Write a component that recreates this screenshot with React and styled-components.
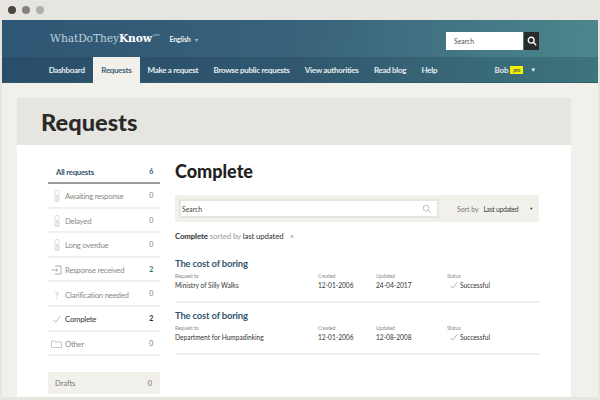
import React from 'react'
import styled, { createGlobalStyle } from 'styled-components'

const Global = createGlobalStyle`
  html, body { margin: 0; padding: 0; }
  body { width: 600px; height: 400px; overflow: hidden; background: #e6e5e0; font-family: Lato, "Noto Sans", sans-serif; color: #2a2a2a; }
`

const Frame = styled.div`
  width: 600px;
  height: 400px;
  box-sizing: border-box;
  padding: 0 2px 3px;
  display: flex;
  flex-direction: column;
`

const Chrome = styled.div`
  height: 20px;
  flex: none;
  display: flex;
  align-items: center;
  gap: 6px;
  padding-left: 6px;
`

const Dot = styled.span`
  width: 8px;
  height: 8px;
  border-radius: 50%;
  background: ${p => p.$color};
`

const Window = styled.div`
  flex: 1;
  min-height: 0;
  display: flex;
  flex-direction: column;
  background: #f2f0eb;
`

const Header = styled.header`
  flex: none;
  background: linear-gradient(100deg, #2f5674 0%, #39627b 50%, #4c888e 100%);
`

const Masthead = styled.div`
  height: 37px;
  display: flex;
  align-items: center;
  padding-left: 48px;
`

const Logo = styled.div`
  font-family: "DejaVu Serif", serif;
  font-size: 10.7px;
  letter-spacing: -0.1px;
  color: #bfd0da;
  b { color: #fff; font-weight: 700; }
  sup { font-size: 4px; margin-left: 1px; vertical-align: 6px; line-height: 0; }
`

const Lang = styled.div`
  margin-left: 10px;
  font-size: 7px;
  font-weight: 700;
  letter-spacing: -0.15px;
  color: #e8eef1;
  span { margin-left: 4px; color: #a9bfcc; font-size: 6px; font-weight: 400; }
`

const SearchBox = styled.div`
  margin: 5px 59px 0 auto;
  display: flex;
  gap: 1px;
  height: 18px;
`

const SearchField = styled.div`
  width: 77px;
  box-sizing: border-box;
  background: #fff;
  font-size: 6.8px;
  color: #555;
  padding-left: 8px;
  line-height: 18px;
`

const SearchButton = styled.div`
  width: 15px;
  background: #2b2b2b;
  display: flex;
  align-items: center;
  justify-content: center;
`

const Nav = styled.nav`
  height: 25px;
  display: flex;
  align-items: stretch;
  padding-left: 39px;
  background: rgba(20, 50, 70, 0.22);
  border-bottom: 1px solid #2f5a68;
`

const NavItem = styled.a`
  display: flex;
  align-items: center;
  padding: 0 7.7px;
  font-size: 8px;
  font-weight: 700;
  letter-spacing: -0.3px;
  white-space: nowrap;
  color: ${p => (p.$active ? '#3f6078' : '#e6edf0')};
  background: ${p => (p.$active ? '#f2f0eb' : 'transparent')};
  margin-bottom: ${p => (p.$active ? '-1px' : '0')};
  margin-left: ${p => (p.$active ? '0.5px' : '0')};
  width: ${p => (p.$active ? '47px' : 'auto')};
  box-sizing: border-box;
  justify-content: center;
`

const User = styled.div`
  margin-left: auto;
  margin-right: 62px;
  display: flex;
  align-items: center;
  font-size: 8px;
  font-weight: 700;
  letter-spacing: -0.2px;
  color: #dfe8ec;
`

const Pro = styled.span`
  margin-left: 2px;
  padding: 0 3px;
  background: #f2f200;
  color: #555;
  font-size: 5px;
  line-height: 8px;
`

const Caret = styled.span`
  margin-left: 7px;
  font-size: 6px;
  color: ${p => p.$color || 'inherit'};
`

const Page = styled.main`
  flex: 1;
  min-height: 0;
  margin: 15px 27px 0 15px;
  display: flex;
  flex-direction: column;
`

const TitleBar = styled.div`
  height: 47px;
  flex: none;
  background: #e6e5e0;
  display: flex;
  align-items: center;
  padding-left: 24px;
`

const PageTitle = styled.h1`
  margin: 0;
  font-size: 23.6px;
  font-weight: 900;
  color: #2a2a2a;
`

const Panel = styled.div`
  flex: 1;
  min-height: 0;
  background: #fff;
  padding: 17px 32px 0 31px;
  display: flex;
  gap: 15px;
`

const Sidebar = styled.aside`
  width: 112px;
  flex: none;
`

const SideRow = styled.div`
  height: ${p => (p.$head ? '22px' : '24.6px')};
  box-sizing: border-box;
  display: flex;
  align-items: center;
  padding: ${p => (p.$head ? '0' : '2px')} 7px 0 ${p => (p.$head ? '8px' : '3px')};
  font-size: 7.8px;
  letter-spacing: -0.25px;
  white-space: nowrap;
  font-weight: ${p => (p.$head ? 700 : 400)};
  color: ${p => (p.$head ? '#34566e' : p.$active ? '#333' : '#8a8a86')};
  border-bottom: ${p => (p.$head ? '2px solid #9a9a96' : '2px solid #f1f0ec')};
`

const SideIcon = styled.span`
  width: 11px;
  margin-right: 3px;
  flex: none;
  display: flex;
  justify-content: center;
`

const Count = styled.span`
  margin-left: auto;
  font-size: 7px;
  align-self: flex-start;
  margin-top: 5px;
  font-weight: ${p => (p.$strong ? 700 : 400)};
  color: ${p => p.$color || '#777'};
`

const Drafts = styled.div`
  margin-top: 16px;
  height: 22px;
  background: #f2f0eb;
  display: flex;
  align-items: center;
  justify-content: space-between;
  padding: 0 8px 0 7px;
  font-size: 7.5px;
  color: #77776f;
`

const Content = styled.section`
  width: 364px;
  flex: none;
  margin-top: -1px;
`

const Heading = styled.h2`
  margin: 0;
  font-size: 18px;
  font-weight: 900;
  line-height: 20px;
  color: #222;
`

const Toolbar = styled.div`
  margin-top: 14px;
  height: 27px;
  background: #f2f0eb;
  display: flex;
  align-items: center;
  padding-left: 4px;
`

const ToolSearch = styled.div`
  width: 260px;
  height: 19px;
  box-sizing: border-box;
  background: #fff;
  border: 2px solid #e6e5df;
  padding: 0 5px 0 1px;
  display: flex;
  align-items: center;
  justify-content: space-between;
  font-size: 6.8px;
  color: #444;
`

const Sort = styled.div`
  margin-left: 18px;
  flex: 1;
  display: flex;
  align-items: center;
  white-space: nowrap;
  font-size: 6.8px;
  color: #777;
  b { margin-left: 5px; font-weight: 400; color: #444; letter-spacing: -0.3px; }
`

const SortCaret = styled(Caret)`
  margin-left: 11px;
  font-size: 4px;
`

const Filter = styled.div`
  margin-top: 9px;
  margin-bottom: 10px;
  font-size: 7.8px;
  line-height: 10px;
  letter-spacing: -0.1px;
  color: #999;
  b { font-weight: 700; color: #333; }
  em { font-style: normal; color: #333; }
  i { margin-left: 6px; font-style: normal; color: #999; }
`

const Result = styled.article`
  height: 52px;
  box-sizing: border-box;
  border-bottom: 2px solid #f0efeb;
  padding-top: 6px;
`

const ResultTitle = styled.h3`
  margin: 0 0 3px;
  font-size: 9.5px;
  letter-spacing: -0.2px;
  line-height: 13px;
  font-weight: 700;
  color: #34566e;
`

const Columns = styled.div`
  display: grid;
  grid-template-columns: 143px 58px 71px 1fr;
`

const Label = styled.div`
  font-size: 5px;
  line-height: 7px;
  color: #888;
`

const Value = styled.div`
  margin-top: 1px;
  font-size: 6.6px;
  line-height: 9px;
  color: #333;
`

const Status = styled(Value)`
  margin-top: 1px;
  padding-left: 2px;
  display: flex;
  align-items: flex-end;
  gap: 2px;
`

const Check = ({ size = 9, color = '#999' }) => (
  <svg width={size} height={size} viewBox="0 0 10 10" fill="none" stroke={color} strokeWidth="0.8">
    <path d="M1.5 5.5 L4 8 L9 1.5" />
  </svg>
)

const Hourglass = () => (
  <svg width="6" height="12" viewBox="0 0 6 12" fill="none" stroke="#dcdcd8" strokeWidth="1">
    <rect x="1" y="0.5" width="4" height="5" rx="1" />
    <rect x="1" y="6.5" width="4" height="5" rx="1" fill="#e8e8e4" />
  </svg>
)

const Received = () => (
  <svg width="11" height="10" viewBox="0 0 11 10" fill="none" stroke="#9a9a96" strokeWidth="0.8">
    <path d="M4 1 H10 V9 H4" />
    <path d="M0.5 5 H6.5 M5 3.5 L6.8 5 L5 6.5" />
  </svg>
)

const Folder = () => (
  <svg width="11" height="8" viewBox="0 0 11 8" fill="none" stroke="#bdbdb8" strokeWidth="0.8">
    <path d="M0.5 1 H4 L5 2 H10.5 V7.5 H0.5 Z" />
  </svg>
)

const Question = styled.span`
  font-size: 10px;
  line-height: 10px;
  color: #c8c8c4;
`

const Lens = ({ color, size, sw }) => (
  <svg width={size} height={size} viewBox="0 0 12 12" fill="none" stroke={color} strokeWidth={sw}>
    <circle cx="5" cy="5" r="3.5" />
    <path d="M7.6 7.6 L11 11" />
  </svg>
)

const navLinks = ['Dashboard', 'Requests', 'Make a request', 'Browse public requests', 'View authorities', 'Read blog', 'Help']

const sideItems = [
  { name: 'Awaiting response', count: 0, icon: <Hourglass /> },
  { name: 'Delayed', count: 0, icon: <Hourglass /> },
  { name: 'Long overdue', count: 0, icon: <Hourglass /> },
  { name: 'Response received', count: 2, icon: <Received />, green: true },
  { name: 'Clarification needed', count: 0, icon: <Question>?</Question> },
  { name: 'Complete', count: 2, icon: <Check />, active: true },
  { name: 'Other', count: 0, icon: <Folder /> },
]

const results = [
  { to: 'Ministry of Silly Walks', created: '12-01-2006', updated: '24-04-2017' },
  { to: 'Department for Humpadinking', created: '12-01-2006', updated: '12-08-2008' },
]

const App = () => (
  <Frame>
    <Global />
    <Chrome>
      <Dot $color="#4a453d" />
      <Dot $color="#85827c" />
      <Dot $color="#b0aea8" />
    </Chrome>
    <Window>
      <Header>
        <Masthead>
          <Logo>WhatDoThey<b>Know</b><sup>pro</sup></Logo>
          <Lang>English<span>▾</span></Lang>
          <SearchBox>
            <SearchField>Search</SearchField>
            <SearchButton><Lens color="#fff" size={10} sw={1.6} /></SearchButton>
          </SearchBox>
        </Masthead>
        <Nav>
          {navLinks.map(link => (
            <NavItem key={link} $active={link === 'Requests'}>{link}</NavItem>
          ))}
          <User>Bob<Pro>pro</Pro><Caret>▼</Caret></User>
        </Nav>
      </Header>
      <Page>
        <TitleBar><PageTitle>Requests</PageTitle></TitleBar>
        <Panel>
          <Sidebar>
            <SideRow $head>All requests<Count $strong $color="#34566e">6</Count></SideRow>
            {sideItems.map(item => (
              <SideRow key={item.name} $active={item.active}>
                <SideIcon>{item.icon}</SideIcon>
                {item.name}
                <Count $strong={item.count > 0} $color={item.green ? '#2f7a5a' : item.active ? '#222' : undefined}>{item.count}</Count>
              </SideRow>
            ))}
            <Drafts>Drafts<span>0</span></Drafts>
          </Sidebar>
          <Content>
            <Heading>Complete</Heading>
            <Toolbar>
              <ToolSearch>Search<Lens color="#b5b5b0" size={10} sw={1} /></ToolSearch>
              <Sort>Sort by<b>Last updated</b><SortCaret $color="#333">▼</SortCaret></Sort>
            </Toolbar>
            <Filter><b>Complete</b> sorted by <em>last updated</em><i>×</i></Filter>
            {results.map(r => (
              <Result key={r.to}>
                <ResultTitle>The cost of boring</ResultTitle>
                <Columns>
                  <div><Label>Request to</Label><Value>{r.to}</Value></div>
                  <div><Label>Created</Label><Value>{r.created}</Value></div>
                  <div><Label>Updated</Label><Value>{r.updated}</Value></div>
                  <div><Label>Status</Label><Status><Check />Successful</Status></div>
                </Columns>
              </Result>
            ))}
          </Content>
        </Panel>
      </Page>
    </Window>
  </Frame>
)

export default App
